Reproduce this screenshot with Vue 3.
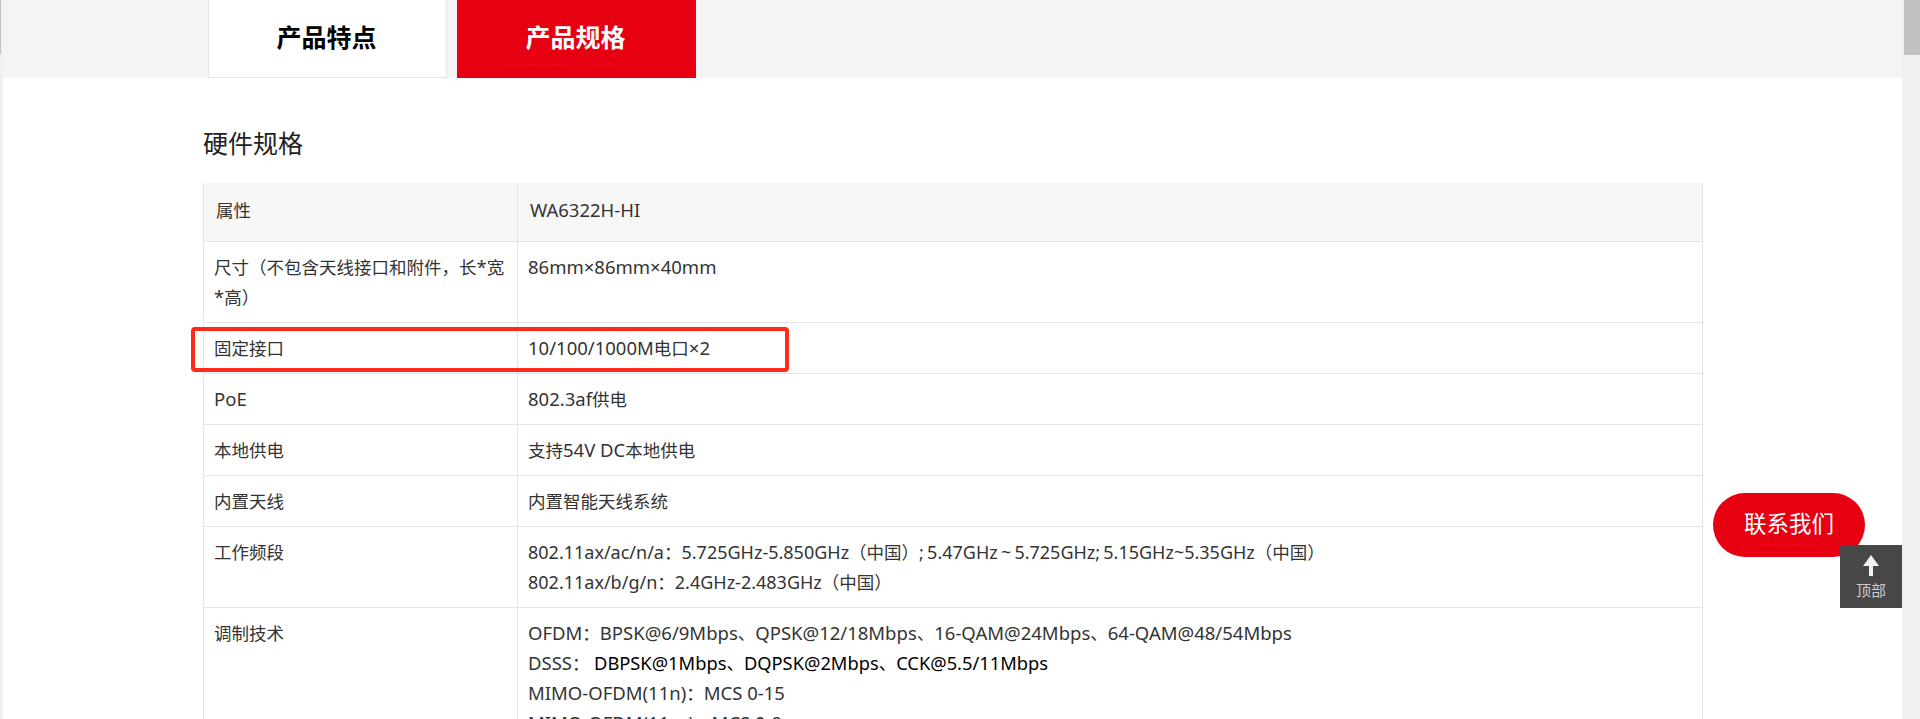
<script setup>
const rows = [
  { k: '尺寸（不包含天线接口和附件，长*宽*高）', v: ['86mm×86mm×40mm'] },
  { k: '固定接口', v: ['10/100/1000M电口×2'] },
  { k: 'PoE', v: ['802.3af供电'] },
  { k: '本地供电', v: ['支持54V DC本地供电'] },
  { k: '内置天线', v: ['内置智能天线系统'] },
  { k: '工作频段', tight: true, v: ['802.11ax/ac/n/a：5.725GHz-5.850GHz（中国）; 5.47GHz ~ 5.725GHz; 5.15GHz~5.35GHz（中国）', '802.11ax/b/g/n：2.4GHz-2.483GHz（中国）'] },
]
// Latin runs are set a little larger than the CJK runs around them.
const runs = (text) =>
  text.match(/[\x20-\x7e×]+|[^\x20-\x7e×]+/g).map((t) => ({ t, lat: /^[\x20-\x7e×]/.test(t) }))
</script>

<template>
  <div class="page">
    <div class="inner">
      <div class="band">
        <div class="tab">产品特点</div>
        <div class="tab active">产品规格</div>
      </div>
      <div class="content">
        <h2 class="title">硬件规格</h2>
        <table class="spec">
          <colgroup><col class="c1" /><col /></colgroup>
          <tbody>
            <tr class="head"><td>属性</td><td><span class="lat">WA6322H-HI</span></td></tr>
            <tr v-for="r in rows" :key="r.k">
              <td><span v-for="s in runs(r.k)" :key="s.t" :class="{ lat: s.lat }">{{ s.t }}</span></td>
              <td :class="{ tight: r.tight }">
                <div v-for="l in r.v" :key="l">
                  <span v-for="s in runs(l)" :key="s.t" :class="{ lat: s.lat }">{{ s.t }}</span>
                </div>
              </td>
            </tr>
            <tr>
              <td>调制技术</td>
              <td>
                <div><span class="lat">OFDM</span>：<span class="lat">BPSK@6/9Mbps</span>、<span class="lat">QPSK@12/18Mbps</span>、<span class="lat">16-QAM@24Mbps</span>、<span class="lat">64-QAM@48/54Mbps</span></div>
                <div><span class="lat">DSSS</span>： <span class="dark"><span class="lat">DBPSK@1Mbps</span>、<span class="lat">DQPSK@2Mbps</span>、<span class="lat">CCK@5.5/11Mbps</span></span></div>
                <div><span class="lat">MIMO-OFDM(11n)</span>：<span class="lat">MCS 0-15</span></div>
                <div><span class="lat">MIMO-OFDM(11ac)</span>：<span class="lat">MCS 0-9</span></div>
              </td>
            </tr>
          </tbody>
        </table>
      </div>
    </div>

    <div class="mark"></div>
    <div class="edge"><div class="edge-thumb"></div></div>
    <div class="bar"><div class="thumb"></div></div>
    <div class="contact">联系我们</div>
    <div class="totop">
      <svg width="16" height="21" viewBox="0 0 16 21"><path d="M8 0 16 11H10V21H6V11H0Z" fill="#f2f2f2" /></svg>
      <span>顶部</span>
    </div>
  </div>
</template>

<style>
html, body { margin: 0; height: 100%; overflow: hidden; background: #fff; }
</style>

<style scoped>
.page {
  position: relative;
  width: 1920px;
  height: 719px;
  overflow: hidden;
  background: #fff;
  font-family: "Noto Sans", "Noto Sans CJK SC", sans-serif;
  color: #333;
}
.inner { padding: 0 18px 0 3px; }
.band {
  display: flex;
  gap: 10px;
  height: 78px;
  padding-left: 205px;
  background: #f4f4f4;
}
.tab {
  box-sizing: border-box;
  width: 239px;
  height: 78px;
  padding: 0 2px 6px 0;
  display: flex;
  align-items: center;
  justify-content: center;
  background: #fff;
  border: 1px solid #e5e5e5;
  border-top: 0;
  font-size: 25px;
  font-weight: 700;
  color: #000;
}
.tab.active { background: #e60012; border: 0; color: #fff; }
.content { padding: 47px 0 0 200px; }
.title {
  margin: 0 0 21px;
  height: 37px;
  line-height: 37px;
  font-size: 25px;
  font-weight: 400;
  color: #222;
}
.spec {
  width: 1500px;
  table-layout: fixed;
  border-collapse: collapse;
  font-size: 17.5px;
  line-height: 30px;
}
.c1 { width: 314px; }
.spec td {
  padding: 10px;
  vertical-align: top;
  border: 1px solid #e5e5e5;
}
.spec .head td {
  padding: 12px 12px 16px;
  background: #f7f7f7;
  border-top: 0;
  vertical-align: middle;
}
.lat { font-size: 18.5px; }
.spec .tight { word-spacing: -1.5px; }
.spec .tight .lat { font-size: 18px; }
.dark { color: #000; }
.dark .lat { font-size: 18.3px; }
.mark {
  position: absolute;
  left: 191px;
  top: 327px;
  width: 598px;
  height: 45px;
  box-sizing: border-box;
  border: 4px solid #ff2a1a;
  border-radius: 4px;
}
.edge { position: absolute; left: 0; top: 0; width: 3px; height: 719px; background: #f0f0f0; }
.edge-thumb { width: 1px; height: 54px; background: #c1c1c1; }
.bar {
  position: absolute;
  left: 1902px;
  top: 0;
  width: 18px;
  height: 719px;
  background: #f0f0f0;
}
.thumb { width: 16px; height: 55px; margin-left: 2px; background: #c1c1c1; }
.contact {
  position: absolute;
  left: 1713px;
  top: 493px;
  width: 152px;
  height: 64px;
  border-radius: 32px;
  background: #e60012;
  color: #fff;
  font-size: 22.5px;
  line-height: 62px;
  text-align: center;
}
.totop {
  position: absolute;
  left: 1840px;
  top: 545px;
  width: 62px;
  height: 63px;
  background: #474747;
  color: #ccc;
  font-size: 15px;
  line-height: 20px;
  text-align: center;
}
.totop svg { display: block; margin: 10px auto 4px; }
.totop span { display: block; }
</style>
